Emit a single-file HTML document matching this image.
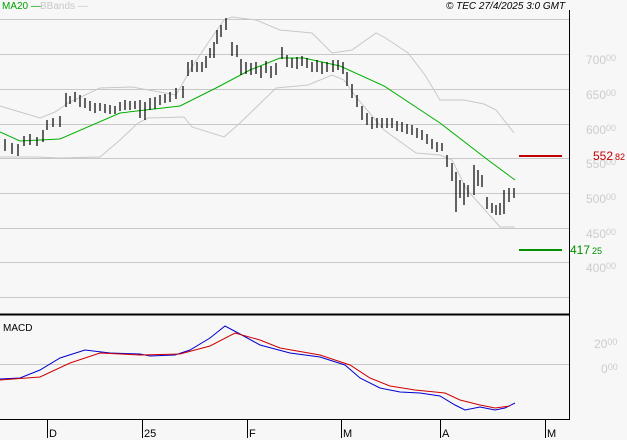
<!DOCTYPE html>
<html><head><meta charset="utf-8"><style>
body{margin:0;background:#f7f7f7;}
svg{display:block;font-family:"Liberation Sans",sans-serif;}
</style></head><body>
<svg width="627" height="440" viewBox="0 0 627 440" xmlns="http://www.w3.org/2000/svg">
<rect width="627" height="440" fill="#f7f7f7"/>
<g stroke="#c8c8c8" stroke-width="1">
<line x1="0" y1="19.5" x2="569" y2="19.5"/><line x1="0" y1="54.5" x2="569" y2="54.5"/>
<line x1="0" y1="89.5" x2="569" y2="89.5"/><line x1="0" y1="124.5" x2="569" y2="124.5"/>
<line x1="0" y1="158.5" x2="569" y2="158.5"/><line x1="0" y1="193.5" x2="569" y2="193.5"/>
<line x1="0" y1="228.5" x2="569" y2="228.5"/><line x1="0" y1="262.5" x2="569" y2="262.5"/>
<line x1="0" y1="297.5" x2="569" y2="297.5"/><line x1="0" y1="364.5" x2="569" y2="364.5"/>
</g>
<line x1="569.5" y1="10" x2="569.5" y2="419" stroke="#000"/>
<line x1="0" y1="314.5" x2="570" y2="314.5" stroke="#000" stroke-width="2"/>
<line x1="0" y1="419.5" x2="570" y2="419.5" stroke="#000"/>
<g stroke="#000"><line x1="47.5" y1="419" x2="47.5" y2="438"/><line x1="142.5" y1="419" x2="142.5" y2="438"/><line x1="247.5" y1="419" x2="247.5" y2="438"/><line x1="341.5" y1="419" x2="341.5" y2="438"/><line x1="440.5" y1="419" x2="440.5" y2="438"/><line x1="545.5" y1="419" x2="545.5" y2="438"/></g>
<g font-size="11" fill="#000"><text x="49" y="437">D</text><text x="144" y="437">25</text><text x="249" y="437">F</text><text x="343" y="437">M</text><text x="442" y="437">A</text><text x="547" y="437">M</text></g>
<g fill="#cccccc" font-size="12">
<text x="586" y="64">700<tspan font-size="9" dy="-3">00</tspan></text>
<text x="586" y="99">650<tspan font-size="9" dy="-3">00</tspan></text>
<text x="586" y="134">600<tspan font-size="9" dy="-3">00</tspan></text>
<text x="586" y="168">550<tspan font-size="9" dy="-3">00</tspan></text>
<text x="586" y="203">500<tspan font-size="9" dy="-3">00</tspan></text>
<text x="586" y="238">450<tspan font-size="9" dy="-3">00</tspan></text>
<text x="586" y="272">400<tspan font-size="9" dy="-3">00</tspan></text>
<text x="594" y="348">20<tspan font-size="9" dy="-3">00</tspan></text>
<text x="601" y="373">0<tspan font-size="9" dy="-3">00</tspan></text>
</g>
<line x1="519" y1="156" x2="562" y2="156" stroke="#c00000" stroke-width="2"/>
<text x="593" y="160" fill="#c00000" font-size="12">552<tspan font-size="9" dx="2">82</tspan></text>
<line x1="519" y1="250" x2="562" y2="250" stroke="#009000" stroke-width="2"/>
<text x="570" y="254" fill="#009000" font-size="12">417<tspan font-size="9" dx="2">25</tspan></text>
<text x="2" y="9" font-size="10" fill="#00a000">MA20 —</text>
<text x="40" y="9" font-size="10" fill="#c8c8c8">BBands —</text>
<text x="446" y="9" font-size="10" font-style="italic" fill="#000">© TEC 27/4/2025 3:0 GMT</text>
<text x="3" y="331" font-size="10" fill="#000">MACD</text>
<polyline fill="none" stroke="#c8c8c8" points="0,106 20,112 40,118 55,112 68,103 100,88 132,87 176,95 192,67 210,40 224,20 232,17 256,20 280,30 312,33 332,53 352,50 376,33 384,37 408,53 425,75 440,100 464,100 484,104 496,110 514,133"/>
<polyline fill="none" stroke="#c8c8c8" points="0,157 36,157 60,158 100,157 120,140 138,123 148,118 184,117 192,127 224,137 240,123 276,88 308,85 332,75 344,80 356,97 384,130 416,153 440,155 452,160 467,190 485,210 500,227 515,227"/>
<polyline fill="none" stroke="#00b000" points="0,132 20,141 60,139 120,113 180,106 216,88 250,70 280,58 304,58 340,66 384,86 440,123 488,160 515,180"/>
<polyline fill="none" stroke="#0000d0" points="0,379 20,378 40,370 60,358 85,350 110,353 140,354 150,356 175,355 190,350 210,338 225,326 240,334 260,345 290,353 320,357 345,365 360,378 380,388 400,392 420,393 440,396 455,405 465,410 480,407 495,410 505,408 515,403"/>
<polyline fill="none" stroke="#d00000" points="0,380 40,377 70,363 100,353 140,355 180,354 210,346 235,333 260,340 280,348 320,355 350,365 370,378 390,386 415,390 445,393 460,400 480,405 495,408 510,406"/>
<g stroke="#000" stroke-width="1.2">
<path d="M5 139v12M12 143v11M18 144v12M24 136v10M30 134v11M37 137v9M43 130v12M47 120v10M53 118v9M60 116v11M66 93v14M70 96v8M75 92v10M80 95v12M85 98v10M90 101v10M95 103v10M100 103v8M105 104v9M110 105v9M115 106v8M120 102v9M125 100v10M130 101v9M135 101v8M140 100v18M145 102v18M150 98v12M155 97v12M160 95v10M165 94v9M170 92v10M176 88v11M183 86v12M188 62v14M192 60v12M197 62v10M202 62v10M206 56v12M210 48v10M214 42v16M217 30v14M221 25v12M226 18v12M232 42v14M237 45v12M241 59v16M246 62v12M251 63v12M256 62v12M261 66v12M266 61v12M271 66v12M276 63v12M282 47v12M287 55v12M292 58v10M297 57v12M302 56v10M307 58v10M312 62v10M317 60v12M322 62v12M327 62v10M333 60v12M338 60v10M343 62v12M347 72v14M352 84v14M357 95v12M362 106v14M367 113v12M372 117v12M377 118v10M382 118v10M387 118v10M392 118v10M397 121v10M402 122v10M407 124v10M412 125v10M417 128v10M422 130v10M427 134v10M432 139v10M437 142v10M442 143v8M447 155v12M452 163v18M456 172v40M460 180v18M464 183v22M468 185v12M474 165v30M478 170v16M482 175v12M487 197v12M492 203v10M496 205v10M500 203v12M504 190v24M509 188v14M514 188v10"/>
</g>
</svg>
</body></html>
